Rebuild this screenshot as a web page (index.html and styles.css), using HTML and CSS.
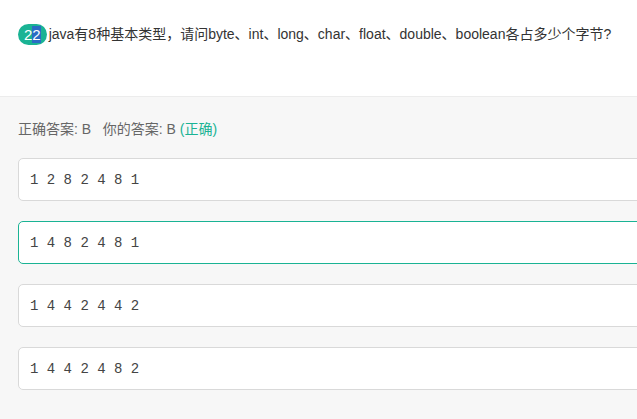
FILE: index.html
```html
<!DOCTYPE html>
<html lang="zh">
<head>
<meta charset="utf-8">
<link rel="stylesheet" href="styles.css">
</head>
<body>
<div class="question">
  <span class="badge">2<span class="sel">2</span></span><span class="qtext">java有8种基本类型，请问byte、int、long、char、float、double、boolean各占多少个字节?</span>
</div>
<div class="answer-area">
  <div class="result">正确答案: B&nbsp;&nbsp;&nbsp;你的答案: B <span class="ok">(正确)</span></div>
  <div class="options">
    <div class="option">1 2 8 2 4 8 1</div>
    <div class="option selected">1 4 8 2 4 8 1</div>
    <div class="option">1 4 4 2 4 4 2</div>
    <div class="option">1 4 4 2 4 8 2</div>
  </div>
</div>
</body>
</html>
```

FILE: styles.css
```css
html, body {
  margin: 0;
  padding: 0;
  background: #f7f7f7;
  overflow: hidden;
  height: 419px;
}
body {
  font-family: "Liberation Sans", "Noto Sans CJK SC", sans-serif;
  font-size: 14px;
  color: #333;
}
.question {
  background: #fff;
  height: 97px;
  box-sizing: border-box;
  padding: 24px 0 0 18px;
  border-bottom: 1px solid #ececec;
  display: flex;
  align-items: flex-start;
  white-space: nowrap;
}
.badge {
  display: inline-block;
  height: 21px;
  line-height: 21px;
  padding: 0 6px;
  border-radius: 11px;
  background: #1ab394;
  color: #fff;
  font-size: 15px;
}
.sel {
  background: #2a6cc4;
}
.qtext {
  line-height: 21px;
  margin-left: 2px;
  color: #333;
}
.answer-area {
  padding: 22px 0 0 18px;
  overflow: hidden;
}
.result {
  color: #666;
  line-height: 20px;
}
.ok {
  color: #1ab394;
}
.options {
  margin-top: 19px;
  margin-right: -30px;
  display: flex;
  flex-direction: column;
  gap: 20px;
}
.option {
  height: 43px;
  box-sizing: border-box;
  background: #fff;
  border: 1px solid #d9d9d9;
  border-radius: 5px;
  padding-left: 11px;
  display: flex;
  align-items: center;
  font-family: "Liberation Mono", monospace;
  font-size: 14px;
  color: #444;
}
.option.selected {
  border-color: #1ab394;
}
```
